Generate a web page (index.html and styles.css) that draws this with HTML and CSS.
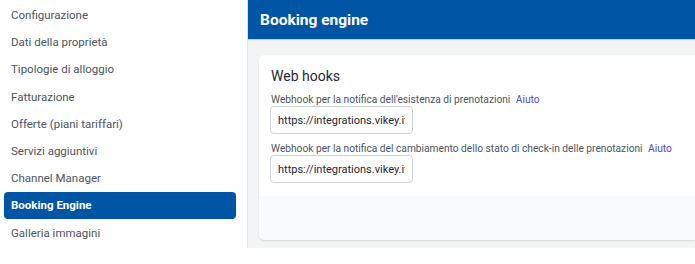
FILE: index.html
```html
<!DOCTYPE html>
<html lang="it">
<head>
    <meta charset="UTF-8">
    <meta name="viewport" content="width=device-width, initial-scale=1.0">
    <title>Booking engine</title>
    <link rel="stylesheet" href="styles.css">
</head>
<body>

    <div class="layout">
        <!-- Sidebar -->
        <nav class="sidebar">
            <a class="nav-item">Configurazione</a>
            <a class="nav-item">Dati della proprietà</a>
            <a class="nav-item">Tipologie di alloggio</a>
            <a class="nav-item">Fatturazione</a>
            <a class="nav-item">Offerte (piani tariffari)</a>
            <a class="nav-item">Servizi aggiuntivi</a>
            <a class="nav-item">Channel Manager</a>
            <a class="nav-item active">Booking Engine</a>
            <a class="nav-item">Galleria immagini</a>
        </nav>

        <!-- Main -->
        <div class="main">
            <div class="page-header">Booking engine</div>

            <div class="content">
                <div class="card">
                    <div class="card-body">
                        <h3 class="card-title">Web hooks</h3>

                        <div class="field">
                            <label>Webhook per la notifica dell'esistenza di prenotazioni <a class="help">Aiuto</a></label>
                            <input type="text" class="text-input" value="https://integrations.vikey.it/webhooks/booking">
                        </div>

                        <div class="field">
                            <label>Webhook per la notifica del cambiamento dello stato di check-in delle prenotazioni <a class="help">Aiuto</a></label>
                            <input type="text" class="text-input" value="https://integrations.vikey.it/webhooks/checkin">
                        </div>
                    </div>
                    <div class="card-footer"></div>
                </div>
            </div>
        </div>
    </div>

</body>
</html>
```

FILE: styles.css
```css
body {
    margin: 0;
    font-family: Roboto, "Open Sans", Arial, sans-serif;
    background: #fff;
    color: #374151;
}

.layout {
    display: flex;
    height: 248px;
}

/* Sidebar */
.sidebar {
    width: 247px;
    flex-shrink: 0;
    border-right: 1px solid #e5e7eb;
    padding-top: 1.5px;
    display: flex;
    flex-direction: column;
}
.nav-item {
    display: flex;
    align-items: center;
    height: 27.2px;
    margin: 0 11px 0 4px;
    padding-left: 7px;
    font-size: 11.5px;
    color: #4b5563;
    border-radius: 4px;
    cursor: pointer;
}
.nav-item.active {
    background: #0055a5;
    color: #fff;
    font-weight: 700;
}

/* Main */
.main {
    flex: 1;
    display: flex;
    flex-direction: column;
    min-width: 0;
    background: #f3f4f6;
}
.page-header {
    height: 39px;
    background: #0055a5;
    color: #fff;
    font-size: 15.5px;
    font-weight: 700;
    display: flex;
    align-items: center;
    padding-left: 12px;
    box-shadow: 0 1px 1px rgba(0, 0, 0, 0.15);
}
.content {
    flex: 1;
    padding: 16px 0 8px 11px;
}
.card {
    background: #fff;
    border-radius: 5px 0 0 5px;
    box-shadow: 0 1px 2px rgba(0, 0, 0, 0.12);
    height: 185px;
    display: flex;
    flex-direction: column;
    overflow: hidden;
}
.card-body {
    padding: 13px 12px 0 12px;
    flex: 1;
}
.card-title {
    margin: 0 0 10px;
    font-size: 14px;
    font-weight: 400;
    color: #1f2937;
}
.field {
    margin-bottom: 9px;
}
.field label {
    display: block;
    white-space: nowrap;
    font-size: 10.2px;
    color: #4b5563;
    margin-bottom: 1px;
}
.help {
    color: #4f46e5;
    margin-left: 3px;
    cursor: pointer;
}
.text-input {
    width: 143px;
    height: 28px;
    box-sizing: border-box;
    margin-left: -1px;
    border: 1px solid #d1d5db;
    border-radius: 4px;
    padding: 0 7px;
    font-family: inherit;
    font-size: 11px;
    color: #1f2937;
    background: #fff;
}
.card-footer {
    height: 44px;
    flex-shrink: 0;
    background: #f9fafb;
}
```
